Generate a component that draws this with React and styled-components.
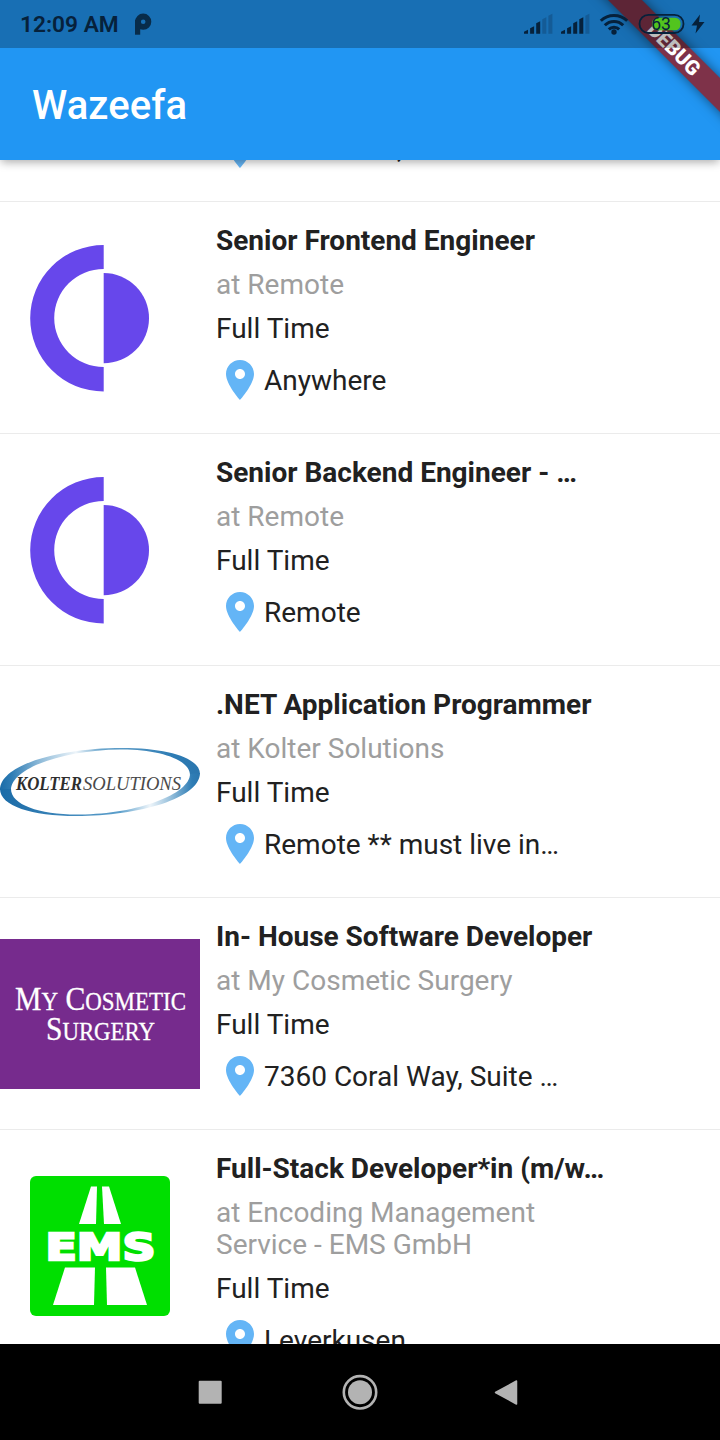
import React from "react";
import styled, { createGlobalStyle } from "styled-components";

const GlobalStyle = createGlobalStyle`
  * { box-sizing: border-box; }
  body { margin: 0; background: #fff; font-family: Roboto, sans-serif; }
`;

const Screen = styled.div`
  position: relative;
  width: 720px;
  height: 1440px;
  overflow: hidden;
  display: flex;
  flex-direction: column;
  background: #fff;
`;

const Header = styled.header`
  position: relative;
  z-index: 1;
  flex: none;
  height: 160px;
  padding-top: 48px;
  background: #2196f3;
  box-shadow: 0 4px 8px -2px rgba(0, 0, 0, 0.18), 0 2px 10px rgba(0, 0, 0, 0.18);
`;

const Title = styled.h1`
  margin: 0;
  padding-left: 32px;
  font-size: 40px;
  font-weight: 500;
  line-height: 115px;
  letter-spacing: 0.1px;
  color: #fff;
`;

const StatusBar = styled.div`
  position: absolute;
  z-index: 3;
  top: 0;
  left: 0;
  width: 720px;
  height: 48px;
  padding: 0 15px 0 20px;
  display: flex;
  align-items: center;
  background: rgba(0, 0, 0, 0.26);
`;

const Clock = styled.span`
  width: 114px;
  font-size: 22.7px;
  font-weight: 600;
  line-height: 46px;
  padding-top: 2px;
  color: #06213b;
  white-space: nowrap;
`;

const StatusIcons = styled.svg`
  margin-left: auto;
`;

const BannerClip = styled.div`
  position: absolute;
  z-index: 2;
  top: 0;
  right: 0;
  width: 160px;
  height: 160px;
  overflow: hidden;
  pointer-events: none;
`;

const Banner = styled.div`
  position: absolute;
  top: 36.5px;
  left: 13.5px;
  width: 200px;
  height: 24px;
  transform: rotate(45deg);
  background: #7e3249;
  box-shadow: 0 0 12px rgba(0, 0, 0, 0.5);
  color: #fff;
  font-size: 20.4px;
  font-weight: 900;
  line-height: 24px;
  text-align: center;
`;

const List = styled.main`
  flex: 1;
  min-height: 0;
  overflow: hidden;
`;

const PartialRow = styled.div`
  height: 41px;
  display: flex;
  align-items: flex-end;
  padding: 0 0 29px 216px;
  overflow: hidden;
`;

const Row = styled.article`
  display: flex;
  min-height: 232px;
  border-top: 1px solid #ebebeb;
`;

const Logo = styled.div`
  width: 200px;
  flex: none;
  padding-top: ${(p) => p.$top}px;
  svg { display: block; }
`;

const Details = styled.div`
  width: 400px;
  margin-left: 16px;
  padding: 22px 0 28px;
  display: flex;
  flex-direction: column;
  gap: 12px;
`;

const Line = styled.div`
  width: ${(p) => p.$width || "auto"};
  padding-top: 1px;
  margin-bottom: -1px;
  font-size: 28px;
  line-height: 32px;
  font-weight: ${(p) => (p.$bold ? 700 : 400)};
  color: ${(p) => (p.$muted ? "#9e9e9e" : "#212121")};
  white-space: ${(p) => (p.$wrap ? "normal" : "nowrap")};
`;

const Place = styled.div`
  display: flex;
  align-items: center;
  height: 48px;
`;

const NavBar = styled.nav`
  flex: none;
  height: 96px;
  background: #000;
  display: flex;
  align-items: center;
  justify-content: space-between;
  padding: 0 202px 0 198px;
`;

const HomeIcon = styled.svg`
  margin-left: 3px;
`;

const Pin = () => (
  <svg width="48" height="48" viewBox="0 0 24 24">
    <path
      fill="#64b5f6"
      d="M12 2C8.13 2 5 5.13 5 9c0 5.25 7 13 7 13s7-7.75 7-13c0-3.87-3.13-7-7-7zm0 9.500c-1.380 0-2.500-1.120-2.500-2.500s1.120-2.500 2.500-2.500 2.500 1.120 2.500 2.500-1.120 2.500-2.500 2.500z"
    />
  </svg>
);

const CircleLogo = () => (
  <svg width="200" height="200" viewBox="0 0 200 200">
    <g fill="#6747eb">
      <path d="M103.700 43A73.500 73.250 0 0 0 103.700 189.500V165A49.500 49 0 0 1 103.700 67Z" />
      <path d="M103.700 71A45.300 45.150 0 0 1 103.700 161.300Z" />
    </g>
  </svg>
);

const KolterLogo = () => (
  <svg width="200" height="200" viewBox="0 0 200 200">
    <defs>
      <linearGradient id="topArc" gradientUnits="userSpaceOnUse" x1="0" y1="0" x2="200" y2="0">
        <stop offset="0" stopColor="#1b6ca8" />
        <stop offset="0.060" stopColor="#2f7db5" />
        <stop offset="0.200" stopColor="#8fbbd9" />
        <stop offset="0.380" stopColor="#eef5fa" />
        <stop offset="0.500" stopColor="#6ba6cd" />
        <stop offset="0.850" stopColor="#2f7db5" />
        <stop offset="1" stopColor="#2a76ae" />
      </linearGradient>
      <linearGradient id="bottomArc" gradientUnits="userSpaceOnUse" x1="0" y1="0" x2="200" y2="0">
        <stop offset="0" stopColor="#1b6ca8" />
        <stop offset="0.100" stopColor="#2472ac" />
        <stop offset="0.600" stopColor="#5c9fcb" />
        <stop offset="0.750" stopColor="#eef5fa" />
        <stop offset="0.860" stopColor="#8fbbd9" />
        <stop offset="0.960" stopColor="#2f7db5" />
        <stop offset="1" stopColor="#2a76ae" />
      </linearGradient>
    </defs>
    <path fill="url(#topArc)" d="M0 124C0 98 62 82 122 82C168 82 200 92 200 108L190 109C190 93 157 83 120 83.500C64 84 11 102 11 124Z" />
    <path fill="url(#bottomArc)" d="M0 123C0 140 32 150 76 150C140 150 200 132 200 107L190 108C190 128 138 148 80 148.500C40 149 11 139 11 123Z" />
    <g fontFamily="'Liberation Serif', serif" fontStyle="italic" fontSize="18">
      <text x="16" y="123.500" fill="#2e2e2e" fontWeight="700" textLength="66" lengthAdjust="spacingAndGlyphs">KOLTER</text>
      <text x="83" y="123.500" fill="#4a4a4a" textLength="98" lengthAdjust="spacingAndGlyphs">SOLUTIONS</text>
    </g>
  </svg>
);

const CosmeticLogo = () => (
  <svg width="200" height="150" viewBox="0 0 200 150">
    <rect width="200" height="150" fill="#762b8d" />
    <g fill="#fff" stroke="#fff" strokeWidth="0.300" fontFamily="'Liberation Serif', serif" fontSize="33">
      <text x="15" y="71" textLength="171" lengthAdjust="spacingAndGlyphs">
        M<tspan fontSize="25.500">Y</tspan> C<tspan fontSize="25.500">OSMETIC</tspan>
      </text>
      <text x="46" y="101" textLength="109" lengthAdjust="spacingAndGlyphs">
        S<tspan fontSize="25.500">URGERY</tspan>
      </text>
    </g>
  </svg>
);

const EmsLogo = () => (
  <svg width="200" height="140" viewBox="0 0 200 140">
    <rect x="30" width="140" height="140" rx="6" fill="#00df00" />
    <g fill="#fff">
      <path d="M91 10.500H97L96 48H79Z" />
      <path d="M102 10.500H109L121 48H104Z" />
      <path d="M65 91.500H95L94 129H53Z" />
      <path d="M106 91.500H135L147 129H107Z" />
      <text
        x="45.500"
        y="84"
        fontFamily="'DejaVu Sans', sans-serif"
        fontWeight="700"
        fontSize="37"
        stroke="#fff"
        strokeWidth="2.400"
        textLength="110"
        lengthAdjust="spacingAndGlyphs"
      >
        EMS
      </text>
    </g>
  </svg>
);

const JOBS = [
  { logo: CircleLogo, top: 0, title: "Senior Frontend Engineer", company: "Remote", place: "Anywhere" },
  { logo: CircleLogo, top: 0, title: "Senior Backend Engineer - …", company: "Remote", place: "Remote" },
  { logo: KolterLogo, top: 0, title: ".NET Application Programmer", company: "Kolter Solutions", place: "Remote ** must live in…" },
  { logo: CosmeticLogo, top: 41, title: "In- House Software Developer", company: "My Cosmetic Surgery", place: "7360 Coral Way, Suite …" },
  { logo: EmsLogo, top: 46, title: "Full-Stack Developer*in (m/w…", company: "Encoding Management Service - EMS GmbH", place: "Leverkusen" },
];

const SignalBars = ({ x, active }) => (
  <g transform={`translate(${x} 0)`}>
    {[3.5, 7, 12, 16, 19.5].map((h, i) => (
      <path
        key={h}
        d={`M${i * 6.1} 33.700V${35.2 - h}L${i * 6.1 + 4} ${33.2 - h}V33.700Z`}
        fill="#06213b"
        opacity={i < active ? 1 : 0.25}
      />
    ))}
  </g>
);

export default function App() {
  return (
    <Screen>
      <GlobalStyle />
      <Header>
        <Title>Wazeefa</Title>
      </Header>
      <BannerClip>
        <Banner>DEBUG</Banner>
      </BannerClip>
      <StatusBar>
        <Clock>12:09 AM</Clock>
        <svg width="18" height="48" viewBox="134 0 18 48">
          <circle cx="143.200" cy="21.700" r="5.200" fill="none" stroke="#082c4a" strokeWidth="5.800" />
          <path d="M135 20H140.200V34.700H135Z" fill="#082c4a" />
        </svg>
        <StatusIcons width="182" height="48" viewBox="523 0 182 48">
          <SignalBars x={524} active={3} />
          <SignalBars x={561} active={4} />
          <g fill="none" stroke="#06213b" strokeWidth="3">
            <path d="M600.800 20.800a18.800 18.800 0 0 1 26.400 0" />
            <path d="M604.800 25.200a13 13 0 0 1 18.400 0" />
            <path d="M608.800 29.400a7.300 7.300 0 0 1 10.400 0" />
          </g>
          <circle cx="614" cy="32" r="2.700" fill="#06213b" />
          <rect x="652" y="17.700" width="28.500" height="12.600" rx="5.500" fill="#52c41e" />
          <rect x="639.500" y="14.800" width="44" height="18.200" rx="9.100" fill="none" stroke="#06213b" strokeWidth="1.800" />
          <text x="661" y="30.300" textAnchor="middle" fontSize="17.500" fill="#06213b">63</text>
          <path d="M700 14.500L691.500 25.500H697L695.500 33.500L704.500 22H699Z" fill="#06213b" />
        </StatusIcons>
      </StatusBar>
      <List>
        <PartialRow>
          <Place>
            <Pin />
            <Line>Melbourne,</Line>
          </Place>
        </PartialRow>
        {JOBS.map(({ logo: Mark, top, title, company, place }) => (
          <Row key={title}>
            <Logo $top={top}>
              <Mark />
            </Logo>
            <Details>
              <Line $bold>{title}</Line>
              <Line $muted $wrap $width="340px">at {company}</Line>
              <Line>Full Time</Line>
              <Place>
                <Pin />
                <Line>{place}</Line>
              </Place>
            </Details>
          </Row>
        ))}
      </List>
      <NavBar>
        <svg width="24" height="24" viewBox="0 0 24 24">
          <rect x="0.700" y="0.700" width="23" height="23" rx="1" fill="#b3b3b3" />
        </svg>
        <HomeIcon width="36" height="36" viewBox="0 0 36 36">
          <circle cx="18" cy="18.300" r="16.200" fill="none" stroke="#b3b3b3" strokeWidth="2.600" />
          <circle cx="18" cy="18.300" r="12" fill="#b3b3b3" />
        </HomeIcon>
        <svg width="24" height="26" viewBox="0 0 24 26">
          <path d="M1.500 13.500L22.500 2V25Z" fill="#b3b3b3" stroke="#b3b3b3" strokeWidth="1.500" strokeLinejoin="round" />
        </svg>
      </NavBar>
    </Screen>
  );
}
